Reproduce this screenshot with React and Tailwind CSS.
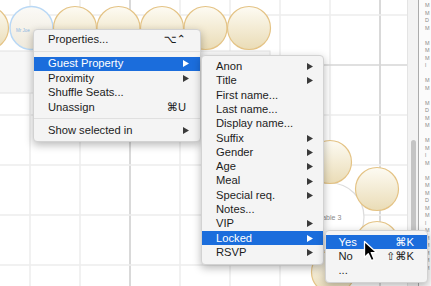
import React from "react";

const FONT = { fontFamily: '"Liberation Sans", "DejaVu Sans", Arial, sans-serif' };

function Arrow({ white }) {
  return (
    <svg width="6" height="7" viewBox="0 0 6 7" className="shrink-0">
      <polygon points="0,0 6,3.5 0,7" fill={white ? "#ffffff" : "#3a3a3a"} />
    </svg>
  );
}

function Row({ label, sc, sub, hi, h = "h-[14.5px]", pl = "pl-[14px]", pr = "pr-[11px]" }) {
  return (
    <div
      className={`${h} ${pl} ${pr} flex items-center justify-between leading-none ${
        hi ? "bg-[#1b6ddc] text-white" : "text-[#1c1c1c]"
      }`}
    >
      <span>{label}</span>
      {sub ? <Arrow white={hi} /> : sc ? <span className="pr-[3px]">{sc}</span> : null}
    </div>
  );
}

function Sep({ h }) {
  return (
    <div className={`${h} flex items-center`}>
      <div className="h-px w-full bg-[#e0e0e0]" />
    </div>
  );
}

const seatsTop = [-13, 31.5, 75, 118.5, 162, 205.5, 249];
const seatsRound = [
  [330, 162],
  [377, 189],
  [377, 243],
  [333, 272],
  [283, 242],
  [283, 189],
];

function Canvas() {
  const vx = [30, 80, 130, 180, 230, 280, 330, 380];
  const hy = [15, 65, 115, 165, 215, 265];
  return (
    <svg width="407" height="286" viewBox="0 0 407 286" className="block">
      <defs>
        <linearGradient id="seat" x1="0" y1="0" x2="0" y2="1">
          <stop offset="0" stopColor="#fdfbf3" />
          <stop offset="1" stopColor="#eadcb6" />
        </linearGradient>
        <linearGradient id="sel" x1="0" y1="0" x2="0" y2="1">
          <stop offset="0" stopColor="#fbfaf7" />
          <stop offset="1" stopColor="#efe9db" />
        </linearGradient>
      </defs>
      <rect width="407" height="286" fill="#ffffff" />
      {vx.map((x) => (
        <line key={"v" + x} x1={x} y1="0" x2={x} y2="286" stroke={x === 130 || x === 380 ? "#cdcdcd" : "#ececec"} strokeWidth="1.5" />
      ))}
      {hy.map((y) => (
        <line key={"h" + y} x1="0" y1={y} x2="407" y2={y} stroke={y === 65 ? "#d6d6d6" : "#ececec"} strokeWidth="1.5" />
      ))}
      <rect x="-5" y="51" width="275" height="42" fill="#f7f7f7" stroke="#e2e2e2" strokeWidth="1" />
      {seatsTop.map((cx, i) =>
        i === 1 ? (
          <g key={cx}>
            <circle cx={cx} cy="28" r="21.5" fill="url(#sel)" stroke="#b9d8f5" strokeWidth="1.5" />
            <text x="16" y="31.5" fontSize="4.5" fill="#8db6e2" style={FONT}>Mr Joe</text>
          </g>
        ) : (
          <circle key={cx} cx={cx} cy="28" r="21.5" fill="url(#seat)" stroke="#e4c385" strokeWidth="1.2" />
        )
      )}
      <circle cx="330" cy="217" r="34" fill="#ffffff" stroke="#dcdcdc" strokeWidth="1.2" />
      <text x="330" y="220" fontSize="7" fill="#8a8a8a" textAnchor="middle" style={FONT}>Table 3</text>
      {seatsRound.map(([cx, cy]) => (
        <circle key={cx + "-" + cy} cx={cx} cy={cy} r="21.5" fill="url(#seat)" stroke="#e4c385" strokeWidth="1.2" />
      ))}
    </svg>
  );
}

export default function App() {
  const sideText = ["M", "M", "D", "M", "", "M", "M", "M", "l", "", "M", "M", "", "M", "D", "M", "M", "", "M", "M", "l", "M", "", "M", "M", "M", "D", "M", "M", "l", "M", "M", "M", "M", "M", "M"];
  return (
    <div className="relative w-[431px] h-[286px] overflow-hidden bg-white text-[11.2px]" style={FONT}>
      <div className="flex h-full">
        <div className="w-[407px] h-full shrink-0">
          <Canvas />
        </div>
        <div className="w-[11px] h-full shrink-0 bg-[#f3f3f3] border-l border-[#e4e4e4] flex flex-col">
          <div className="mt-[140px] ml-[3px] w-[5px] h-[124px] rounded-full bg-[#c4c4c4]" />
        </div>
        <div className="w-px h-full bg-[#ababab] shrink-0" />
        <div className="flex-1 h-full bg-[#fbfbfb] pl-[6px] pt-[2px] flex flex-col text-[5.5px] leading-[7.5px] text-[#8c8c8c] overflow-hidden">
          {sideText.map((t, i) => (
            <span key={i} className="h-[7.5px] whitespace-nowrap">{t}</span>
          ))}
        </div>
      </div>

      {/* main context menu */}
      <div className="absolute left-[33px] top-[29px] w-[168px] pt-[2.5px] pb-[3.5px] bg-[#f4f4f4] border border-[#d2d2d2] rounded-[4px] shadow-[0_3px_8px_rgba(0,0,0,0.28)]">
        <Row label="Properties..." sc="⌥⌃" />
        <Sep h="h-[9.5px]" />
        <Row label="Guest Property" sub hi />
        <Row label="Proximity" sub />
        <Row label="Shuffle Seats..." />
        <Row label="Unassign" sc="⌘U" />
        <Sep h="h-[8.5px]" />
        <Row label="Show selected in" sub />
      </div>

      {/* guest property submenu */}
      <div className="absolute left-[201px] top-[55px] w-[123px] pt-[3.5px] pb-[4.5px] bg-[#f4f4f4] border border-[#d2d2d2] rounded-[4px] shadow-[0_3px_8px_rgba(0,0,0,0.28)]">
        {[
          ["Anon", true],
          ["Title", true],
          ["First name...", false],
          ["Last name...", false],
          ["Display name...", false],
          ["Suffix", true],
          ["Gender", true],
          ["Age", true],
          ["Meal", true],
          ["Special req.", true],
          ["Notes...", false],
          ["VIP", true],
          ["Locked", true],
          ["RSVP", true],
        ].map(([l, s]) => (
          <Row key={l} label={l} sub={s} hi={l === "Locked"} h="h-[14.3px]" pl="pl-[14px]" pr="pr-[10px]" />
        ))}
      </div>

      {/* locked submenu */}
      <div className="absolute left-[325px] top-[230px] w-[103px] pt-[4px] pb-[4px] bg-[#f4f4f4] border border-[#d2d2d2] rounded-[4px] shadow-[0_3px_8px_rgba(0,0,0,0.28)]">
        <Row label="Yes" sc="⌘K" hi h="h-[14.4px]" pl="pl-[12.5px]" pr="pr-[10px]" />
        <Row label="No" sc="⇧⌘K" h="h-[14.4px]" pl="pl-[12.5px]" pr="pr-[10px]" />
        <Row label="..." h="h-[14.4px]" pl="pl-[12.5px]" pr="pr-[10px]" />
      </div>

      {/* mouse cursor */}
      <svg className="absolute left-[363px] top-[240px]" width="16" height="22" viewBox="0 0 16 22">
        <path d="M1.5 1.5 L1.5 17.5 L5.3 13.7 L8.4 20.6 L11.2 19.4 L8.2 12.6 L13.5 12.6 Z" fill="#000000" stroke="#ffffff" strokeWidth="1.3" strokeLinejoin="round" />
      </svg>
    </div>
  );
}
